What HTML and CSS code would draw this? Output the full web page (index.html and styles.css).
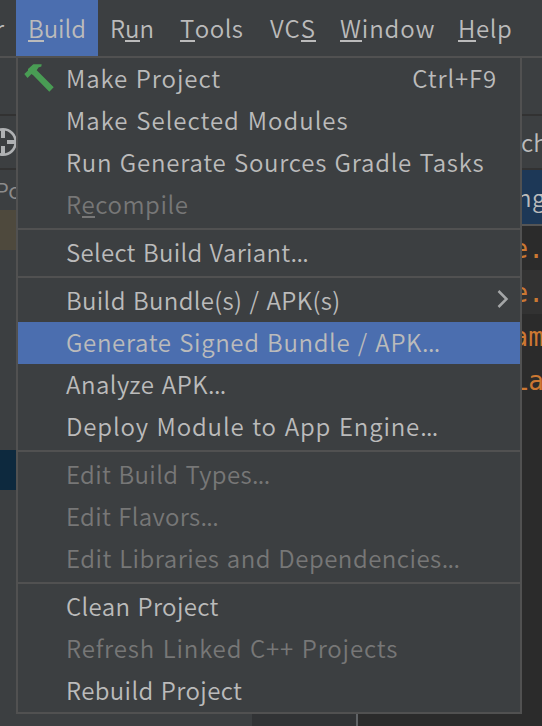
FILE: index.html
```html
<!DOCTYPE html>
<html lang="en">
<head>
<meta charset="utf-8">
<title>Build menu</title>
<link rel="stylesheet" href="styles.css">
</head>
<body>
<nav class="menubar">
  <span class="tab cut">r</span>
  <span class="tab build active"><span><u>B</u>uild</span></span>
  <span class="tab run"><span>R<u>u</u>n</span></span>
  <span class="tab tools"><span><u>T</u>ools</span></span>
  <span class="tab vcs"><span>VC<u>S</u></span></span>
  <span class="tab window"><span><u>W</u>indow</span></span>
  <span class="tab help"><span><u>H</u>elp</span></span>
</nav>
<main class="workspace">
  <aside class="project">
    <div class="toolbar"></div>
    <div class="target">
      <svg width="28" height="28" viewBox="0 0 28 28" fill="none" stroke="#afb1b3" stroke-width="2.6"><circle cx="14" cy="14" r="12.700" /><path d="M14 1v9M14 18v9M1 14h9M18 14h9" stroke-width="4"/></svg>
    </div>
    <div class="crumb"><span>Pc</span></div>
    <div class="excluded"></div>
    <div class="tree"></div>
    <div class="selected"></div>
    <div class="tree-end"></div>
  </aside>
  <section class="middle"><div class="side"></div><div class="gutter"></div><div class="page"></div></section>
  <section class="editor">
    <div class="toolbar"></div>
    <div class="file"><span>ch</span></div>
    <div class="banner"><span>ng</span></div>
    <div class="code"><span>e.</span></div>
    <div class="code caret"><span>e.</span></div>
    <div class="code"><span>am</span></div>
    <div class="code"><span>La</span></div>
  </section>
</main>
<div class="menu">
  <div class="item"><svg class="hammer" width="40" height="38" viewBox="0 0 40 38"><path fill="#499c54" d="M6.300 16 10 12.500V11L15.300 6.300H23.700L23.300 8.500 20.500 9.500 18.700 12.300 35.700 29.300 31.300 33.700 15.500 17.500 13.500 16 9.500 20Z"/></svg><span class="t1">Make Project</span><span class="key">Ctrl+F9</span></div>
  <div class="item"><span class="t2">Make Selected Modules</span></div>
  <div class="item"><span class="t3">Run Generate Sources Gradle Tasks</span></div>
  <div class="item off"><span class="t4">R<u>e</u>compile</span></div>
  <div class="sep"></div>
  <div class="item"><span class="t5">Select Build Variant<i>...</i></span></div>
  <div class="sep"></div>
  <div class="item"><span class="t6">Build Bundle(s) / APK(s)</span><svg class="arrow" width="12" height="20" viewBox="0 0 12 20"><path d="M1.500 2 9.500 10 1.500 18" fill="none" stroke="#a4a6a7" stroke-width="2.500"/></svg></div>
  <div class="item on"><span class="t7">Generate Signed Bundle / APK<i>...</i></span></div>
  <div class="item"><span class="t8">Analyze APK<i>...</i></span></div>
  <div class="item"><span class="t9">Deploy Module to App Engine<i>...</i></span></div>
  <div class="sep"></div>
  <div class="item off"><span class="t10">Edit Build Types<i>...</i></span></div>
  <div class="item off"><span class="t11">Edit Flavors<i>...</i></span></div>
  <div class="item off"><span class="t12">Edit Libraries and Dependencies<i>...</i></span></div>
  <div class="sep"></div>
  <div class="item"><span class="t13">Clean Project</span></div>
  <div class="item off"><span class="t14">Refresh Linked C++ Projects</span></div>
  <div class="item"><span class="t15">Rebuild Project</span></div>
</div>
</body>
</html>
```
FILE: styles.css
```css
* { box-sizing: border-box; }
body { margin: 0; width: 542px; height: 726px; overflow: hidden; position: relative; background: #3c3f41; color: #bbb; font: 24px/42px "Noto Sans CJK SC", "Noto Sans", sans-serif; font-weight: 350; white-space: nowrap; }
u { text-decoration: none; box-shadow: inset 0 -2px #bbb; display: inline-block; line-height: 26px; height: 27px; vertical-align: baseline; margin-bottom: -1px; }
i { font-style: normal; letter-spacing: -.6px; }
.menubar { height: 58px; display: flex; border-bottom: 2px solid #515151; line-height: 55px; }
.tab { flex: none; padding-left: 12px; height: 56px; }
.cut { width: 16px; padding: 0; text-indent: -5px; }
.build { width: 82px; }
.run { width: 70px; }
.tools { width: 90px; letter-spacing: .5px; }
.vcs { width: 70px; letter-spacing: 1.1px; }
.window { width: 118px; letter-spacing: .9px; }
.help { width: 82px; letter-spacing: .6px; }
.active, .on { background: #4b6eaf; }
.workspace { display: grid; grid-template-columns: 16px 506px 20px; height: 668px; }
.project, .editor { overflow: hidden; }
.toolbar { height: 58px; border-bottom: 2px solid #323232; }
.target { height: 54px; border-bottom: 2px solid #323232; padding-top: 12px; }
.target svg { display: block; margin-left: -11px; }
.crumb { height: 40px; font-size: 22px; line-height: 38px; color: #8c8c8c; }
.crumb span { margin-left: -5px; }
.excluded { height: 40px; background: #4e493d; }
.tree { height: 200px; }
.selected { height: 40px; background: #0d293e; }
.middle { display: grid; grid-template-columns: 236px 104px 1fr; }
.gutter { background: #313335; }
.page { background: #2b2b2b; border-left: 2px solid #606366; }
.editor { background: #2b2b2b; }
.editor .toolbar { background: #3c3f41; }
.file { height: 54px; background: #3c3f41; border-bottom: 2px solid #323232; line-height: 52px; }
.file span { margin-left: -1px; }
.banner { height: 56px; background: #1d3857; border-bottom: 2px solid #555; line-height: 54px; }
.banner span { margin-left: -5px; letter-spacing: .5px; }
.code { height: 44px; font: 26px/46px "DejaVu Sans Mono", monospace; color: #cc7832; }
.code span { margin-left: -9.5px; }
.caret { background: #323232; }
.menu { position: absolute; left: 16px; top: 56px; width: 506px; height: 658px; border: 2px solid #515151; background: #3c3f41; }
.item { height: 42px; line-height: 39px; display: flex; align-items: flex-start; padding-left: 48px; position: relative; word-spacing: 1.5px; }
.off { color: #777; }
.off u { box-shadow: inset 0 -2px #777; }
.sep { height: 6px; border: solid #3c3f41; border-width: 2px 0; background: #515151; }
.hammer { position: absolute; left: 0; top: 0; }
.key { margin-left: auto; margin-right: 23px; letter-spacing: .86px; }
.arrow { margin: 9px 11px 0 auto; }
.t1 { letter-spacing: .92px; }
.t2 { letter-spacing: 1px; }
.t3 { letter-spacing: .75px; }
.t4 { letter-spacing: .55px; }
.t5 { letter-spacing: .3px; }
.t6 { letter-spacing: .35px; }
.t7 { letter-spacing: .65px; }
.t8 { letter-spacing: .5px; }
.t9 { letter-spacing: .86px; }
.t10 { letter-spacing: .36px; }
.t11 { letter-spacing: .32px; }
.t12 { letter-spacing: .5px; }
.t13 { letter-spacing: .35px; }
.t14 { letter-spacing: .85px; }
.t15 { letter-spacing: .37px; }
```
